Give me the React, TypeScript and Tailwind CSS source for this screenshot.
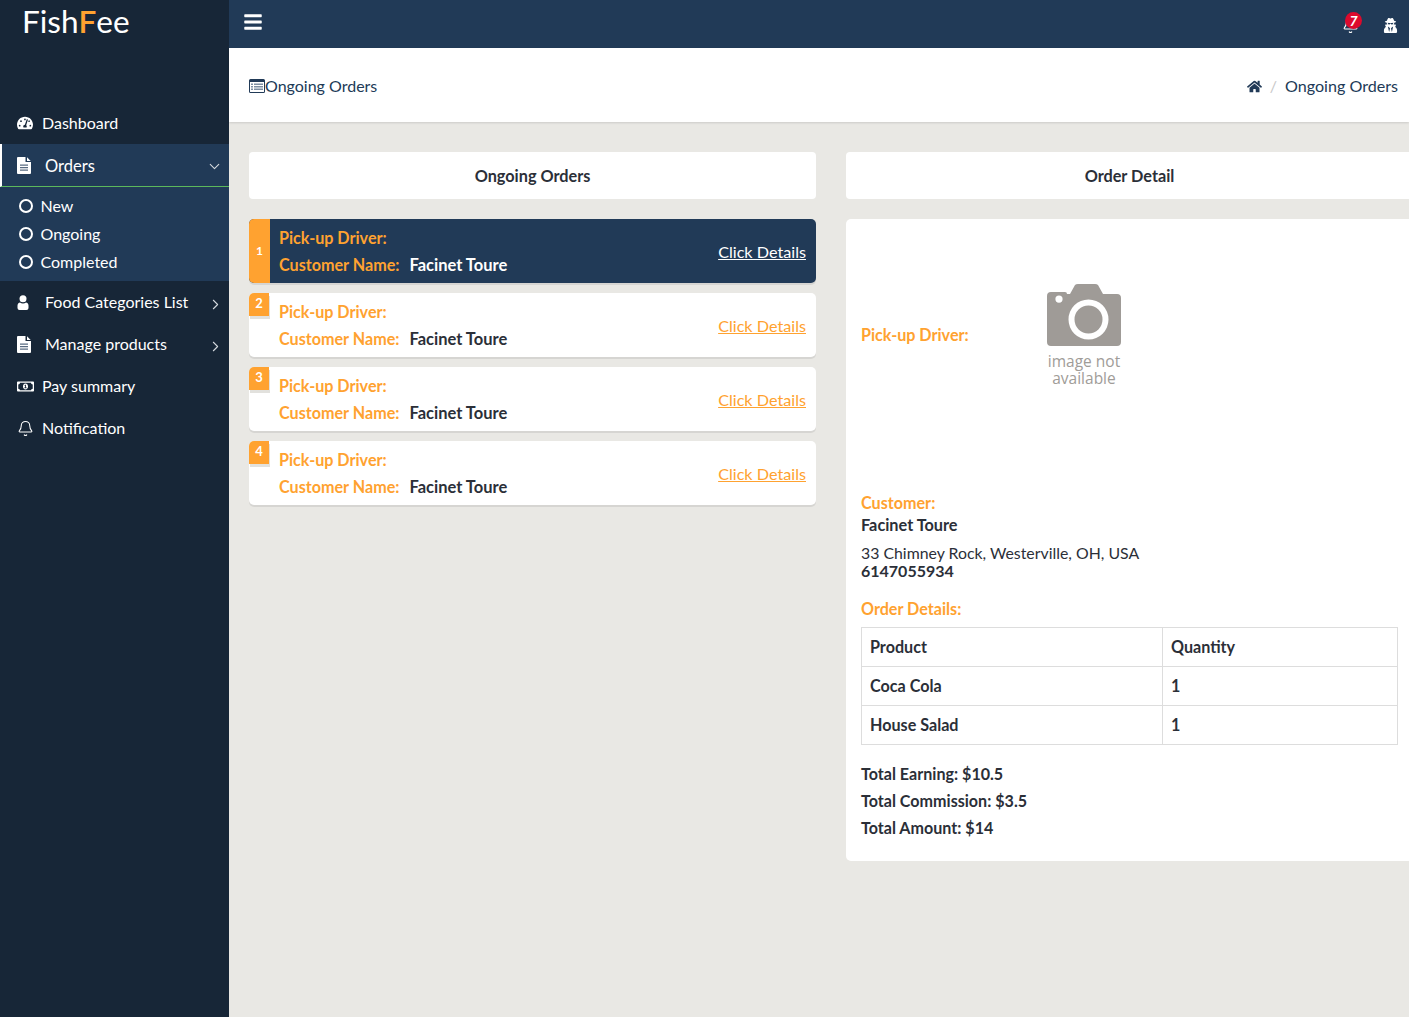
import React from 'react';
import { FaBars, FaHome, FaRegMoneyBillAlt, FaTachometerAlt, FaUserSecret } from 'react-icons/fa';
import { Bell, ChevronDown, ChevronRight } from 'lucide-react';

function FileIcon() {
  return (
    <svg viewBox="0 0 14 17" className="h-[17px] w-[14px]">
      <path fill="#fff" d="M1 0h7.500v5h5.500v11a1 1 0 0 1-1 1H1a1 1 0 0 1-1-1V1a1 1 0 0 1 1-1Z" />
      <path fill="#fff" d="M10 0.300 13.700 4H10Z" />
      <path fill="#213a57" opacity="0.75" d="M3 7.500h8v1.300H3ZM3 10h8v1.300H3ZM3 12.500h8v1.300H3Z" />
    </svg>
  );
}

function UserIcon() {
  return (
    <svg viewBox="0 0 12 15" className="h-[15px] w-[12px]">
      <circle cx="6" cy="3.800" r="3.500" fill="#fff" />
      <path fill="#fff" d="M0.500 13V10.500C0.500 8.500 2 7.500 3 7.500c.8.600 1.800 1 3 1s2.200-.4 3-1c1 0 2.500 1 2.500 3V13a2 2 0 0 1-2 2h-7a2 2 0 0 1-2-2Z" />
    </svg>
  );
}

function ListAltIcon() {
  return (
    <svg viewBox="0 0 16 14" className="h-[14px] w-[16px] shrink-0">
      <path fill="#213a57" d="M1.500 0h13A1.500 1.500 0 0 1 16 1.500v11a1.500 1.500 0 0 1-1.500 1.500h-13A1.500 1.500 0 0 1 0 12.500v-11A1.500 1.500 0 0 1 1.500 0Z" />
      <path fill="#fff" d="M1 3h14v9.500a.5.500 0 0 1-.5.500h-13a.5.500 0 0 1-.5-.500Z" />
      <path fill="#7d8ea1" d="M2 4.500h2v1.500H2ZM5 4.500h9v1.500H5ZM2 7h2v1.500H2ZM5 7h9v1.500H5ZM2 9.500h2V11H2ZM5 9.500h9V11H5Z" />
    </svg>
  );
}

function NavRow({
  icon,
  label,
  arrow,
  wide,
}: {
  icon: React.ReactNode;
  label: string;
  arrow?: boolean;
  wide?: boolean;
}) {
  return (
    <div className="flex h-[42px] items-center pl-[17px] pr-[5px] text-white">
      <span className="flex w-[18px] justify-start">{icon}</span>
      <span className={wide ? 'ml-[10px]' : 'ml-[7px]'}>{label}</span>
      {arrow && <ChevronRight size={17} strokeWidth={1.5} className="ml-auto mt-[4px] text-[#d5dade]" />}
    </div>
  );
}

function SubItem({ label }: { label: string }) {
  return (
    <div className="flex h-[28px] items-center pl-[19px] text-white">
      <span className="h-[14px] w-[14px] rounded-full border-2 border-white" />
      <span className="ml-[7.500px]">{label}</span>
    </div>
  );
}

function Sidebar() {
  return (
    <aside className="flex w-[229px] shrink-0 flex-col bg-[#172637]">
      <div className="h-[102px] pl-[22px] text-[31.500px] leading-[42px] text-white">
        Fish<span className="font-semibold text-[#ffa230]">F</span>ee
      </div>
      <NavRow icon={<FaTachometerAlt className="text-[16px]" />} label="Dashboard" />
      <div className="flex h-[43px] items-center border-b border-l-2 border-b-[#5cb85c] border-l-white bg-[#213a57] pl-[15px] pr-[6px] text-white">
        <span className="flex w-[18px]">
          <FileIcon />
        </span>
        <span className="ml-[10px] pt-[2px] text-[16.500px]">Orders</span>
        <ChevronDown size={17} strokeWidth={1.5} className="ml-auto mt-[3px] text-[#d5dade]" />
      </div>
      <div className="h-[94px] bg-[#213a57] pt-[5px]">
        <SubItem label="New" />
        <SubItem label="Ongoing" />
        <SubItem label="Completed" />
      </div>
      <NavRow icon={<UserIcon />} label="Food Categories List" arrow wide />
      <NavRow icon={<FileIcon />} label="Manage products" arrow wide />
      <NavRow icon={<FaRegMoneyBillAlt className="text-[17px]" />} label="Pay summary" />
      <NavRow icon={<Bell size={17} strokeWidth={1.5} />} label="Notification" />
    </aside>
  );
}

function TopBar() {
  return (
    <header className="flex h-[48px] shrink-0 items-center bg-[#213a57] pl-[14px] pr-[11px] text-white">
      <FaBars className="mb-[4px] text-[20px]" />
      <div className="relative ml-auto mr-[24px] mb-[2px]">
        <Bell size={17} strokeWidth={1.5} className="mt-[5px]" />
        <span className="absolute left-[3px] top-0 flex h-[17px] w-[17px] items-center justify-center rounded-full bg-[#dc0a2d] text-[14px] font-bold italic leading-none">
          7
        </span>
      </div>
      <FaUserSecret className="mt-[3px] text-[15px]" />
    </header>
  );
}

function PageTitle() {
  return (
    <div className="flex h-[74px] shrink-0 items-center bg-white pl-[20px] pr-[11px] pt-[2px] text-[#213a57] shadow-[0_1px_2px_rgba(0,0,0,0.12)]">
      <ListAltIcon />
      <span>Ongoing Orders</span>
      <FaHome className="ml-auto text-[15px]" />
      <span className="ml-[8px] mr-[8px] text-[#c8c8c8]">/</span>
      <span className="text-[16.100px]">Ongoing Orders</span>
    </div>
  );
}

function OrderCard({ num, active }: { num: number; active?: boolean }) {
  return (
    <div
      className={`relative flex h-[64px] items-center justify-between rounded-[5px] pl-[30px] pr-[10px] shadow-[0_2px_0_rgba(0,0,0,0.08)] ${
        active ? 'bg-[#213a57]' : 'bg-white'
      }`}>
      {active ? (
        <span className="absolute left-0 top-0 flex h-full w-[21px] items-center justify-center rounded-l-[5px] bg-[#ffa230] text-[12px] font-bold text-white">
          {num}
        </span>
      ) : (
        <span className="absolute left-0 top-0 flex h-[23px] w-[20px] items-center justify-center rounded-tl-[5px] bg-[#ffa230] pb-[2px] text-[13px] font-bold text-white shadow-[1px_3px_0_#e2e1dd]">
          {num}
        </span>
      )}
      <div className="text-[16.150px] font-bold leading-[27px]">
        <div className="text-[#ffa230]">Pick-up Driver:</div>
        <div className="flex items-baseline">
          <span className="text-[#ffa230]">Customer Name:</span>
          <span className={`ml-[10px] text-[16.500px] ${active ? 'text-white' : 'text-[#2b2f38]'}`}>Facinet Toure</span>
        </div>
      </div>
      <a className={`mt-[2px] text-[16.200px] underline ${active ? 'text-white' : 'text-[#ffa230]'}`}>Click Details</a>
    </div>
  );
}

function TitleCard({ children }: { children: React.ReactNode }) {
  return (
    <div className="flex h-[47px] items-center justify-center rounded-[4px] bg-white pt-[1px] text-[16.250px] font-bold text-[#2b2f38]">
      {children}
    </div>
  );
}

function NoImage() {
  return (
    <div className="flex w-[74px] flex-col items-center">
      <svg viewBox="0 0 74 62" className="h-[62px] w-[74px]">
        <path
          fill="#9f9b97"
          fillRule="evenodd"
          d="M4 8h14a2 2 0 0 1 2 2h3l5-9q1-1 3-1h17q2 0 3 1l5 9h14a4 4 0 0 1 4 4v44a4 4 0 0 1-4 4H4a4 4 0 0 1-4-4V12a4 4 0 0 1 4-4Zm8 3.500a3.500 3.500 0 1 0 0 7.200a3.500 3.500 0 1 0 0-7.200ZM41.500 15.500a20 20 0 1 0 0 40a20 20 0 1 0 0-40Zm0 6a14 14 0 1 1 0 28a14 14 0 1 1 0-28Z"
        />
      </svg>
      <div className="mt-[7px] whitespace-nowrap text-center font-['Open_Sans',sans-serif] text-[15.500px] font-normal leading-[17px] text-[#a09c98]">
        image not
        <br />
        available
      </div>
    </div>
  );
}

function DetailPanel() {
  const cell = 'border border-[#dddddd] px-[8px] align-middle h-[39px]';
  return (
    <div className="h-[642px] rounded-[5px] bg-white px-[15px] text-[16.150px] font-bold text-[#2b2f38]">
      <div className="flex h-[273px] pt-[65px]">
        <div className="mt-[39px] w-[186px] text-[#ffa230]">Pick-up Driver:</div>
        <NoImage />
      </div>
      <div className="leading-[22px]">
        <div className="text-[#ffa230]">Customer:</div>
        <div className="text-[16.300px]">Facinet Toure</div>
      </div>
      <div className="mt-[8px] text-[15.850px] font-normal leading-[18px]">33 Chimney Rock, Westerville, OH, USA</div>
      <div className="text-[16px] leading-[18px]">6147055934</div>
      <div className="mt-[20px] leading-[18px] text-[#ffa230]">Order Details:</div>
      <table className="mt-[9px] w-[537px] border-collapse">
        <tbody>
          <tr>
            <td className={`${cell} w-[301px]`}>Product</td>
            <td className={cell}>Quantity</td>
          </tr>
          <tr>
            <td className={cell}>Coca Cola</td>
            <td className={cell}>1</td>
          </tr>
          <tr>
            <td className={cell}>House Salad</td>
            <td className={cell}>1</td>
          </tr>
        </tbody>
      </table>
      <div className="mt-[15px] text-[16.100px] leading-[27px]">
        <div>Total Earning: $10.5</div>
        <div>Total Commission: $3.5</div>
        <div>Total Amount: $14</div>
      </div>
    </div>
  );
}

export default function App() {
  return (
    <div className="flex h-[1017px] w-[1409px] overflow-hidden bg-[#e9e8e4] font-['Lato',sans-serif] text-[16px]">
      <Sidebar />
      <div className="flex min-w-0 flex-1 flex-col">
        <TopBar />
        <PageTitle />
        <main className="flex gap-[30px] pl-[20px] pt-[30px]">
          <section className="flex w-[567px] shrink-0 flex-col">
            <TitleCard>Ongoing Orders</TitleCard>
            <div className="mt-[20px] flex flex-col gap-[10px]">
              <OrderCard num={1} active />
              <OrderCard num={2} />
              <OrderCard num={3} />
              <OrderCard num={4} />
            </div>
          </section>
          <section className="flex w-[567px] shrink-0 flex-col gap-[20px]">
            <TitleCard>Order Detail</TitleCard>
            <DetailPanel />
          </section>
        </main>
      </div>
    </div>
  );
}
